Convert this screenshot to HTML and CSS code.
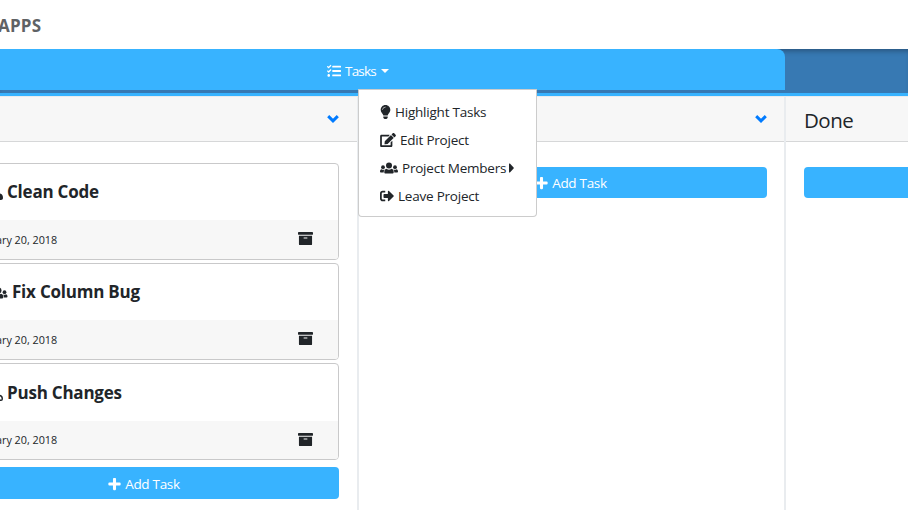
FILE: index.html
```html
<!DOCTYPE html>
<html lang="en">
<head>
<meta charset="utf-8">
<title>Project board</title>
<link rel="stylesheet" href="styles.css">
</head>
<body>
<svg class="sprite" aria-hidden="true">
  <symbol id="user" viewBox="0 0 14 14"><circle cx="7" cy="4" r="3.700"/><path d="M3.500 7.500C1 7.500 0 9.500 0 12c0 1.200.8 2 2 2h10c1.200 0 2-.8 2-2 0-2.500-1-4.500-3.500-4.500a5 5 0 0 1-7 0z"/></symbol>
  <symbol id="user-outline" viewBox="0 0 14 14"><g fill="none" stroke="currentColor" stroke-width="1.400"><circle cx="7" cy="4.200" r="3.300"/><path d="M4 8.300C1.800 8.300.7 9.800.7 12c0 .8.500 1.300 1.300 1.300h10c.8 0 1.300-.5 1.300-1.300 0-2.200-1.100-3.700-3.300-3.700-2 1.200-4 1.200-6 0z"/></g></symbol>
  <symbol id="users" viewBox="0 0 18 14"><circle cx="9" cy="4.500" r="3"/><circle cx="3" cy="6.200" r="1.900"/><circle cx="15" cy="6.200" r="1.900"/><path d="M6.500 7.700C4.800 8 4.300 9.300 4.300 11v.6c0 .5.400.9.900.9h7.600c.5 0 .9-.4.900-.9V11c0-1.700-.5-3-2.200-3.300a4.200 4.200 0 0 1-5 0zM1.600 8.300C.5 8.500 0 9.500 0 10.700c0 .5.300.8.800.8h2.900c0-1.200.2-2.100.7-2.900-.9.400-2 .3-2.800-.3zM16.400 8.300c1.100.2 1.600 1.200 1.600 2.400 0 .5-.3.800-.8.800h-2.900c0-1.200-.2-2.100-.7-2.900.9.400 2 .3 2.800-.3z"/></symbol>
  <symbol id="plus" viewBox="0 0 448 512"><path d="M416 200H280V64c0-17.700-14.300-32-32-32h-48c-17.700 0-32 14.300-32 32v136H32c-17.700 0-32 14.300-32 32v48c0 17.700 14.300 32 32 32h136v136c0 17.700 14.300 32 32 32h48c17.700 0 32-14.300 32-32V312h136c17.700 0 32-14.300 32-32v-48c0-17.700-14.300-32-32-32z"/></symbol>
  <symbol id="archive" viewBox="0 0 512 512"><path fill-rule="evenodd" d="M32 448c0 17.700 14.300 32 32 32h384c17.700 0 32-14.300 32-32V160H32v288zm160-212c0-6.600 5.400-12 12-12h104c6.600 0 12 5.400 12 12v8c0 6.600-5.400 12-12 12H204c-6.600 0-12-5.400-12-12v-8zM480 32H32C14.300 32 0 46.300 0 64v48c0 8.800 7.200 16 16 16h480c8.800 0 16-7.200 16-16V64c0-17.700-14.300-32-32-32z"/></symbol>
  <symbol id="chevron" viewBox="0 0 12 14"><path d="M1.200 4.200 6 8.800l4.800-4.600" fill="none" stroke="currentColor" stroke-width="3"/></symbol>
  <symbol id="tasks" viewBox="0 0 512 512"><path d="M208 132h288c8.800 0 16-7.200 16-16V76c0-8.800-7.200-16-16-16H208c-8.800 0-16 7.200-16 16v40c0 8.800 7.200 16 16 16zm0 160h288c8.800 0 16-7.200 16-16v-40c0-8.800-7.200-16-16-16H208c-8.800 0-16 7.200-16 16v40c0 8.800 7.200 16 16 16zm0 160h288c8.800 0 16-7.200 16-16v-40c0-8.800-7.200-16-16-16H208c-8.800 0-16 7.200-16 16v40c0 8.800 7.200 16 16 16zM64 368c-26.500 0-48.600 21.500-48.600 48s22.100 48 48.600 48 48-21.500 48-48-21.500-48-48-48zm92.500-299-72.200 72.200-15.600 15.600c-4.700 4.700-12.900 4.700-17.600 0L3.500 109.400c-4.700-4.700-4.700-12.300 0-17l15.700-15.700c4.700-4.700 12.300-4.700 17 0l22.700 22.100 63.700-63.300c4.700-4.700 12.300-4.700 17 0l17 16.500c4.600 4.700 4.600 12.300-.1 17zm0 159.600-72.200 72.200-15.700 15.700c-4.700 4.700-12.900 4.700-17.600 0L3.500 269c-4.700-4.700-4.700-12.300 0-17l15.700-15.700c4.700-4.700 12.300-4.700 17 0l22.700 22.100 63.700-63.700c4.700-4.700 12.300-4.700 17 0l17 17c4.600 4.600 4.600 12.200-.1 16.900z"/></symbol>
  <symbol id="bulb" viewBox="0 0 352 512"><path fill-rule="evenodd" d="M96 454.400c0 6.300 1.900 12.500 5.400 17.700l17.100 25.700A32 32 0 0 0 145 512h62a32 32 0 0 0 26.600-14.200l17.100-25.700c3.500-5.200 5.300-11.400 5.300-17.700V416H96v38.400zM0 176c0 44.400 16.500 84.900 43.600 115.800 16.500 18.900 42.400 58.200 52.200 91.500v.7h160.400v-.7c9.800-33.300 35.700-72.600 52.200-91.500C335.500 260.900 352 220.400 352 176 352 78.600 272.900-.3 175.500 0 73.400.3 0 83 0 176zm176-96c-44.100 0-96 45-96 96 0 5-4 8-8 8s-8-4-8-8c0-61.800 50.200-112 112-112 5 0 8 4 8 8s-3 8-8 8z"/></symbol>
  <symbol id="edit" viewBox="0 0 576 512"><path d="m402.600 83.200 90.200 90.200c3.800 3.800 3.800 10 0 13.800L274.400 405.600l-92.800 10.300c-12.400 1.400-22.900-9.100-21.500-21.500l10.300-92.800L388.800 83.200c3.800-3.800 10-3.800 13.800 0zm162-22.900-48.800-48.800c-15.200-15.200-39.900-15.200-55.200 0l-35.400 35.400c-3.800 3.800-3.800 10 0 13.800l90.200 90.200c3.800 3.800 10 3.800 13.800 0l35.400-35.400c15.200-15.300 15.200-40 0-55.200zM384 346.200V448H64V128h229.800c3.200 0 6.200-1.300 8.500-3.500l40-40c7.600-7.600 2.200-20.500-8.500-20.500H48C21.500 64 0 85.500 0 112v352c0 26.500 21.500 48 48 48h352c26.500 0 48-21.500 48-48V306.200c0-10.700-12.900-16-20.500-8.500l-40 40c-2.200 2.300-3.500 5.300-3.500 8.500z"/></symbol>
  <symbol id="leave" viewBox="0 0 512 512"><path d="m497 273-168 168c-15 15-41 4.500-41-17v-96H152c-13.300 0-24-10.700-24-24v-96c0-13.300 10.700-24 24-24h136V88c0-21.400 25.900-32 41-17l168 168c9.300 9.400 9.300 24.600 0 34zM192 436v-40c0-6.600-5.400-12-12-12H96c-17.700 0-32-14.300-32-32V160c0-17.700 14.300-32 32-32h84c6.600 0 12-5.400 12-12V76c0-6.600-5.400-12-12-12H96c-53 0-96 43-96 96v192c0 53 43 96 96 96h84c6.600 0 12-5.400 12-12z"/></symbol>
  <symbol id="caret-right" viewBox="0 0 5 14"><path d="M0 3v8c0 .6.500.8.900.4l3.700-3.800c.4-.4.400-.8 0-1.200L.9 2.600C.5 2.200 0 2.400 0 3z"/></symbol>
</svg>

<header class="brand"><span class="brand-name">APPS</span></header>
<nav class="navbar">
  <div class="tab">
    <div class="dropdown">
      <div class="toggle"><svg class="icon"><use href="#tasks"/></svg><span class="toggle-text">Tasks</span><i class="caret"></i></div>
      <div class="menu">
        <div class="item"><svg class="icon narrow"><use href="#bulb"/></svg><span>Highlight Tasks</span></div>
        <div class="item"><svg class="icon edit"><use href="#edit"/></svg><span>Edit Project</span></div>
        <div class="item"><svg class="icon wide"><use href="#users"/></svg><span>Project Members</span><svg class="icon tiny"><use href="#caret-right"/></svg></div>
        <div class="item"><svg class="icon"><use href="#leave"/></svg><span>Leave Project</span></div>
      </div>
    </div>
  </div>
</nav>

<main class="board">
  <section class="column">
    <div class="column-head"><svg class="icon chevron"><use href="#chevron"/></svg></div>
    <div class="column-body has-cards">
      <article class="card">
        <h2 class="card-title"><svg class="icon user"><use href="#user"/></svg><span>Clean Code</span></h2>
        <div class="card-foot"><span class="date">January 20, 2018</span><svg class="icon archive"><use href="#archive"/></svg></div>
      </article>
      <article class="card">
        <h2 class="card-title"><svg class="icon group"><use href="#users"/></svg><span>Fix Column Bug</span></h2>
        <div class="card-foot"><span class="date">January 20, 2018</span><svg class="icon archive"><use href="#archive"/></svg></div>
      </article>
      <article class="card tall-title">
        <h2 class="card-title"><svg class="icon user"><use href="#user-outline"/></svg><span>Push Changes</span></h2>
        <div class="card-foot"><span class="date">January 20, 2018</span><svg class="icon archive"><use href="#archive"/></svg></div>
      </article>
      <div class="add"><svg class="icon plus"><use href="#plus"/></svg><span>Add Task</span></div>
    </div>
  </section>
  <section class="column middle">
    <div class="column-head"><svg class="icon chevron"><use href="#chevron"/></svg></div>
    <div class="column-body"><div class="add"><svg class="icon plus"><use href="#plus"/></svg><span>Add Task</span></div></div>
  </section>
  <section class="column">
    <div class="column-head"><span class="column-name">Done</span></div>
    <div class="column-body"><div class="add"><svg class="icon plus"><use href="#plus"/></svg><span>Add Task</span></div></div>
  </section>
</main>
</body>
</html>
```
FILE: styles.css
```css
* { box-sizing: border-box; }
body {
  margin: 0;
  height: 510px;
  overflow: hidden;
  background: #fff;
  color: #212529;
  font: 14px/21px "Open Sans", "Noto Sans", sans-serif;
}
.sprite { display: none; }
.icon { width: 14px; height: 14px; flex: none; fill: currentColor; display: block; }

.brand { height: 49px; display: flex; align-items: center; padding-top: 2px; }
.brand-name { color: #5f6265; font-size: 17px; font-weight: 700; letter-spacing: 0.2px; margin-left: -2px; }

.navbar {
  height: 47px;
  background: #3779b3;
  border-bottom: 3px solid #38b3ff;
  box-shadow: inset 0 5px 5px -3px rgba(30, 60, 90, .6);
}
.tab {
  width: 785px;
  height: 41px;
  background: #38b3ff;
  border-top-right-radius: 8px;
  color: #fff;
}
.dropdown { position: relative; width: 62px; margin-left: 327px; }
.toggle { display: flex; align-items: center; height: 43px; }
.toggle-text { margin: 1px 0 0 4px; font-size: 13.5px; letter-spacing: -0.8px; }
.caret { margin-left: 5px; border: 4px solid transparent; border-top-color: #fff; border-bottom: 0; }
.menu {
  position: absolute;
  top: 40px;
  left: 31px;
  width: 179px;
  height: 128px;
  padding: 8px 21px;
  background: #fff;
  border: 1px solid rgba(0, 0, 0, .2);
  border-radius: 0 0 4px 4px;
  color: #212529;
  z-index: 2;
}
.item { display: flex; align-items: center; height: 28px; gap: 4px; font-size: 13.5px; letter-spacing: -0.22px; white-space: nowrap; }
.narrow { width: 11px; }
.edit { width: 16px; }
.wide { width: 18px; }
.tiny { width: 5px; margin-left: -1px; }

.board { display: flex; height: 414px; width: 1281px; margin-left: -68px; }
.column { width: 427px; border-right: 2px solid #e9ecef; }
.column-head {
  height: 46px;
  display: flex;
  align-items: center;
  justify-content: flex-end;
  padding: 0 18px;
  background: #f7f7f7;
  border-top: 1px solid #e9ecef;
  border-bottom: 1px solid #d6d7d8;
}
.column-name { margin-right: auto; font-size: 20.5px; line-height: 28px; padding-top: 1px; letter-spacing: -0.5px; }
.chevron { width: 12px; color: #007bff; }
.column-body { padding: 25px 18px 0; }
.has-cards { padding-top: 21px; }
.middle .column-head, .middle .column-body { padding-right: 17px; }
.card {
  height: 97px;
  margin-bottom: 3px;
  border: 1px solid #c9c9ca;
  border-radius: 4px;
  overflow: hidden;
}
.card-title {
  height: 56px;
  margin: 0;
  padding: 0 0 2px 38px;
  display: flex;
  align-items: center;
  gap: 4px;
  font-size: 17px;
  font-weight: 700;
  letter-spacing: -0.22px;
  white-space: nowrap;
}
.user { margin-top: 4px; }
.group { width: 19px; margin-top: 3px; }
.card-foot {
  height: 39px;
  display: flex;
  align-items: center;
  justify-content: space-between;
  padding: 0 25px 2px 20px;
  background: #f7f7f7;
}
.date { font-size: 10.8px; letter-spacing: -0.02px; margin-left: 3px; padding-top: 1px; }
.archive { width: 15px; height: 15px; }
.tall-title .card-title { height: 57px; padding-bottom: 1px; }
.tall-title .card-foot { height: 38px; }
.add {
  height: 31px;
  display: flex;
  align-items: center;
  justify-content: center;
  gap: 4px;
  border-radius: 4px;
  background: #38b3ff;
  color: #fff;
  font-size: 13.5px;
  letter-spacing: -0.3px;
}
.add span { padding-top: 1px; }
.middle .add { padding-right: 2px; }
.has-cards .add { height: 32px; margin-top: 7px; padding: 1px 1px 0 0; }
.plus { width: 13px; }
```
